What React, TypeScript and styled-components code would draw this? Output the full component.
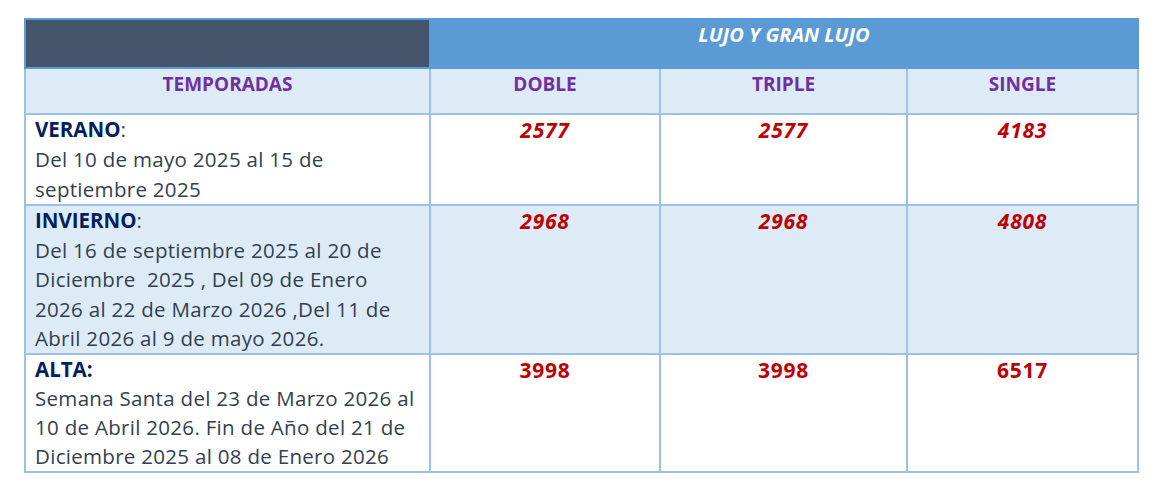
import React from 'react';
import styled, { createGlobalStyle } from 'styled-components';

const GlobalStyle = createGlobalStyle`
  html, body {
    margin: 0;
    padding: 0;
    background: #ffffff;
  }
  body {
    font-family: "Open Sans", Lato, "Liberation Sans", sans-serif;
  }
`;

const Page = styled.div`
  padding: 18px 0 0 24px;
`;

const Table = styled.table`
  width: 1113px;
  border-collapse: collapse;
  table-layout: fixed;
  border: 2px solid #9bc2e6;
`;

const Row = styled.tr<{ $h: number }>`
  height: ${(p) => p.$h}px;
`;

const Cell = styled.td<{ $bg?: string }>`
  border: 2px solid #9bc2e6;
  background: ${(p) => p.$bg || '#ffffff'};
  vertical-align: top;
  padding: 0;
`;

const TopDark = styled.td`
  background: #44546a;
  border: 2px solid #5b9bd5;
  border-right: none;
  padding: 0;
`;

const TopBlue = styled.td`
  background: #5b9bd5;
  border: 2px solid #5b9bd5;
  color: #ffffff;
  font-style: italic;
  font-weight: 700;
  font-size: 20px;
  line-height: 30px;
  text-align: center;
  vertical-align: top;
  padding: 0;
`;

const HeadCell = styled.td`
  border: 2px solid #9bc2e6;
  background: #ddebf7;
  color: #7030a0;
  font-weight: 700;
  font-size: 19px;
  line-height: 30px;
  text-align: center;
  vertical-align: top;
  padding: 0;
`;

const Season = styled.div<{ $lh: number }>`
  padding: 0 0 0 9px;
  font-size: 20.5px;
  letter-spacing: 0.3px;
  line-height: ${(p) => p.$lh}px;
  color: #333f50;
  white-space: nowrap;
`;

const Label = styled.span`
  color: #002060;
  font-weight: 700;
  letter-spacing: 0;
`;

const Price = styled.div<{ $italic?: boolean }>`
  text-align: center;
  font-size: 21px;
  letter-spacing: 0.8px;
  line-height: 30px;
  font-weight: 700;
  font-style: ${(p) => (p.$italic ? 'italic' : 'normal')};
  color: #c00000;
`;

type SeasonRow = {
  label: string;
  colonBold: boolean;
  lines: string[];
  prices: string[];
  italic: boolean;
  bg: string;
  height: number;
  lh: number;
};

const seasons: SeasonRow[] = [
  {
    label: 'VERANO',
    colonBold: false,
    lines: ['Del 10 de mayo 2025 al 15 de', 'septiembre 2025'],
    prices: ['2577', '2577', '4183'],
    italic: true,
    bg: '#ffffff',
    height: 91,
    lh: 29.8,
  },
  {
    label: 'INVIERNO',
    colonBold: false,
    lines: [
      'Del 16 de septiembre 2025 al 20 de',
      'Diciembre\u00a0 2025 , Del 09 de Enero',
      '2026 al 22 de Marzo 2026 ,Del 11 de',
      'Abril 2026 al 9 de mayo 2026.',
    ],
    prices: ['2968', '2968', '4808'],
    italic: true,
    bg: '#ddebf7',
    height: 149,
    lh: 29.4,
  },
  {
    label: 'ALTA',
    colonBold: true,
    lines: [
      'Semana Santa del 23 de Marzo 2026 al',
      '10 de Abril 2026. Fin de Año del 21 de',
      'Diciembre 2025 al 08 de Enero 2026',
    ],
    prices: ['3998', '3998', '6517'],
    italic: false,
    bg: '#ffffff',
    height: 118,
    lh: 28.7,
  },
];

export default function App() {
  return (
    <Page>
      <GlobalStyle />
      <Table>
        <colgroup>
          <col style={{ width: 405 }} />
          <col style={{ width: 230 }} />
          <col style={{ width: 247 }} />
          <col style={{ width: 231 }} />
        </colgroup>
        <tbody>
          <Row $h={49}>
            <TopDark />
            <TopBlue colSpan={3}>LUJO Y GRAN LUJO</TopBlue>
          </Row>
          <Row $h={46}>
            <HeadCell>TEMPORADAS</HeadCell>
            <HeadCell>DOBLE</HeadCell>
            <HeadCell>TRIPLE</HeadCell>
            <HeadCell>SINGLE</HeadCell>
          </Row>
          {seasons.map((s) => (
            <Row key={s.label} $h={s.height}>
              <Cell $bg={s.bg}>
                <Season $lh={s.lh}>
                  {s.colonBold ? (
                    <Label>{s.label}:</Label>
                  ) : (
                    <>
                      <Label>{s.label}</Label>:
                    </>
                  )}
                  {s.lines.map((l) => (
                    <div key={l}>{l}</div>
                  ))}
                </Season>
              </Cell>
              {s.prices.map((p, i) => (
                <Cell key={i} $bg={s.bg}>
                  <Price $italic={s.italic}>{p}</Price>
                </Cell>
              ))}
            </Row>
          ))}
        </tbody>
      </Table>
    </Page>
  );
}
